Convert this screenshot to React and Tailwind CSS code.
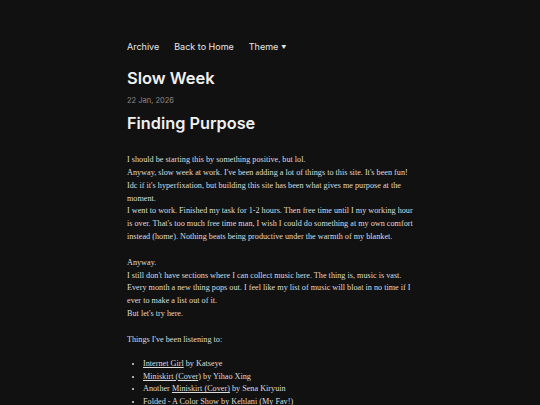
import React from 'react';

export default function App() {
  return (
    <div className="min-h-[405px] bg-[#111111] text-[#e8e8e8]">
      <div className="w-[286px] mx-auto pt-[38px]">
        {/* Nav */}
        <nav className="flex items-center gap-[15px] text-[9px] leading-[16px] text-[#e6e6e6]" style={{ fontFamily: 'Inter, sans-serif' }}>
          <a>Archive</a>
          <a>Back to Home</a>
          <a className="flex items-center gap-[3px]">Theme <span className="text-[5px] mt-[1px]">▼</span></a>
        </nav>

        <div style={{ fontFamily: 'Inter, sans-serif' }}>
          <h1 className="mt-[12px] text-[16.5px] leading-[22px] font-semibold text-[#f0f0f0]">Slow Week</h1>
          <div className="mt-[7px] text-[7.5px] leading-[10px] text-[#8a8a8a]">22 Jan, 2026</div>
          <h2 className="mt-[4px] text-[16.3px] leading-[26px] font-semibold text-[#f0f0f0]">Finding Purpose</h2>
        </div>

        {/* Post body */}
        <div className="mt-[18px] text-[8.2px] leading-[12.85px] text-[#dcdcdc]" style={{ fontFamily: '"Liberation Serif", serif' }}>
          <p>
            I should be starting this by something positive, but lol.<br />
            Anyway, slow week at work. I've been adding a lot of things to this site. It's been fun! Idc if it's hyperfixation, but building this site has been what gives me purpose at the moment.<br />
            I went to work. Finished my task for 1-2 hours. Then free time until I my working hour is over. That's too much free time man, I wish I could do something at my own comfort instead (home). Nothing beats being productive under the warmth of my blanket.
          </p>
          <p className="mt-[12.85px]">
            Anyway.<br />
            I still don't have sections where I can collect music here. The thing is, music is vast. Every month a new thing pops out. I feel like my list of music will bloat in no time if I ever to make a list out of it.<br />
            But let's try here.
          </p>
          <p className="mt-[12.85px]">Things I've been listening to:</p>
          <ul className="mt-[11px] list-disc pl-[16px]">
            <li><a className="underline">Internet Girl</a> by Katseye</li>
            <li><a className="underline">Miniskirt (Cover)</a> by Yihao Xing</li>
            <li>Another <a className="underline">Miniskirt (Cover)</a> by Sena Kiryuin</li>
            <li><a className="underline">Folded - A Color Show</a> by Kehlani (My Fav!)</li>
          </ul>
        </div>
      </div>
    </div>
  );
}
